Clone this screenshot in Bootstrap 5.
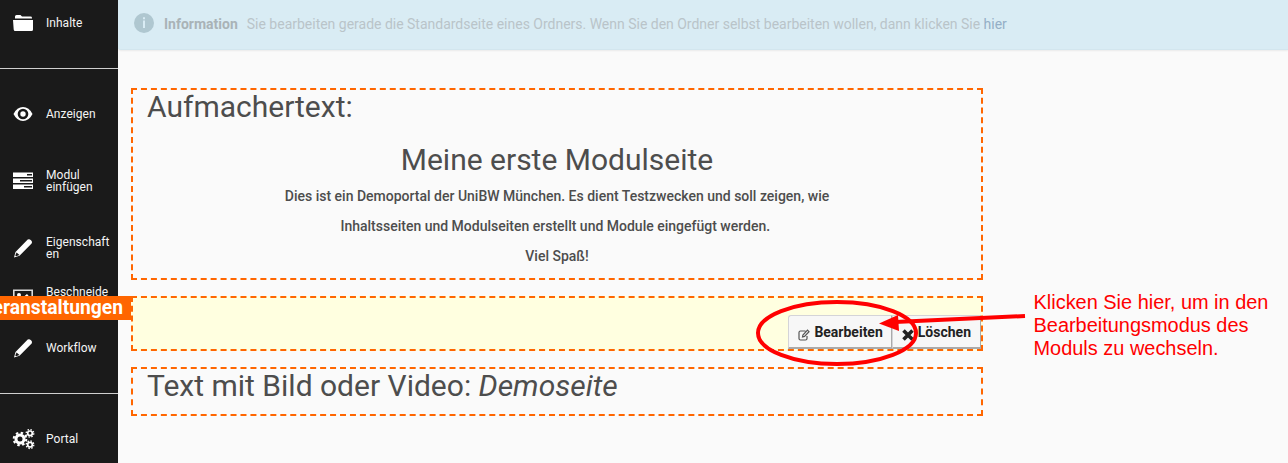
<!DOCTYPE html>
<html lang="de">
<head>
<meta charset="utf-8">
<meta name="viewport" content="width=device-width, initial-scale=1">
<title>Modulseite bearbeiten</title>
<link href="https://cdn.jsdelivr.net/npm/bootstrap@5.3.0/dist/css/bootstrap.min.css" rel="stylesheet">
<style>
body{font-family:Roboto,"Liberation Sans",sans-serif;background:#fafafa;color:#4d4d4d;height:463px}
.side{width:118px;background:#1a1a1a;color:#fff;font-size:12px;line-height:12px}
.side .entry{height:67px;padding-left:12px;gap:12px;color:#f4f4f4;flex-shrink:0}
.side .entry svg{width:22px;height:22px;flex-shrink:0}
.side .entry span{width:66px;overflow-wrap:anywhere;letter-spacing:.03px}
.side .rule{height:1px;background:#cfcfcf;flex-shrink:0}
.side .rule.lower{margin:12px 0 11px}
.side .entry.first{height:46px;margin-bottom:22px}
.side .entry.view{margin-top:11px}
.side .entry.crop{height:33px}
.band{left:0;top:296px;width:131px;height:24px;background:#f60;color:#fff;font-size:19.3px;line-height:24px;font-weight:700;padding-right:8px}
.info{height:50px;background:#d9ecf4;color:#b9c4c9;font-size:14px;padding:0 16px;margin-bottom:38px;border-bottom:1px solid #d3e6ee;border-bottom-left-radius:3px;box-shadow:0 1px 2px #0001}
.info svg{margin-top:-4px}
.info b{color:#a9b3b7;margin:0 9px 0 10px}
.info a{color:#94afc6}
.info-copy{letter-spacing:-.01px}
.content-col{width:852px;margin-left:13px;gap:16px}
.module{border:2px dashed #f60}
.module h2{font-size:30px;line-height:34px;font-weight:400;padding-left:14px;margin:0;color:#4d4d4d}
.module .headline{margin-top:19px;margin-bottom:4px}
.intro p{font-size:14px;line-height:30px;font-weight:500;margin:0}
.module-intro{height:192px}
.module-events{height:55px;background:#ffffe0}
.module-media{height:49px}
.tools .btn{height:34px;border:1px solid #d4d4d8;border-right-color:#aaa;border-bottom:2px solid #aaa;background:#f7f7f7;color:#222;font-size:14px;font-weight:700;border-radius:0;padding:2px 8px 0 9px;line-height:31px}
.tools .btn:last-child{padding-right:9px}
.tools .btn:first-child{border-top-left-radius:3px}
.note{color:#f00;font:19.95px/23px "Liberation Sans",sans-serif;left:1033.5px;top:291px}
.marks{left:740px;top:285px}
</style>
</head>
<body class="d-flex overflow-hidden position-relative">
<svg class="d-none"><symbol id="pen" viewBox="0 0 22 22"><path fill="#fff" d="M2 20.5 3.5 15 14.5 3.7Q16.7 1 19 3.2T18.4 7.8L7.5 18.8Z"/><path fill="#1a1a1a" d="m4.5 15.5 3 2.6-3.4 1.2-.8-.8z"/></symbol></svg>
<nav class="side d-flex flex-column h-100 flex-shrink-0">
  <div class="entry first d-flex align-items-center"><svg viewBox="0 0 22 22"><path fill="#fff" d="M3 6V4.5Q3 3 4.5 3H8.5L10 4.6H18.5Q20 4.6 20 6V6.4H3ZM1 8H21V17.5Q21 19 19.5 19H3.2Q1.8 19 1.7 17.5Z"/></svg><span>Inhalte</span></div>
  <div class="rule"></div>
  <div class="entry view d-flex align-items-center"><svg viewBox="0 0 22 22"><path fill="#fff" d="M1.5 11Q5 4 11 4T20.5 11Q17 18 11 18T1.5 11Z"/><circle cx="11" cy="11" r="5.3" fill="#1a1a1a"/><circle cx="11" cy="11" r="2.7" fill="#fff"/></svg><span>Anzeigen</span></div>
  <div class="entry d-flex align-items-center"><svg viewBox="0 0 22 22"><path fill="#fff" d="M1 2.5h20v4.5H1zM1 8.5h20V13H1zM1 14.5h20V19H1z"/><path stroke="#1a1a1a" stroke-width="1.5" d="M15 4.8h5M8 10.8h12M12 16.8h8"/></svg><span>Modul einfügen</span></div>
  <div class="entry d-flex align-items-center"><svg viewBox="0 0 22 22"><use href="#pen"/></svg><span>Eigenschaften</span></div>
  <div class="entry crop d-flex align-items-center"><svg viewBox="0 0 22 22"><path fill="none" stroke="#ddd" stroke-width="1.6" d="M1.8 3.3H20.2V18.5H1.8Z"/><circle cx="7" cy="8" r="2" fill="#fff"/><path fill="#fff" d="m9 12 6-5 4 5v5H4z"/></svg><span>Beschneiden</span></div>
  <div class="entry d-flex align-items-center"><svg viewBox="0 0 22 22"><use href="#pen"/></svg><span>Workflow</span></div>
  <div class="rule lower"></div>
  <div class="entry d-flex align-items-center"><svg viewBox="0 0 22 22" overflow="visible" fill="none" stroke="#fff"><circle cx="8" cy="11" r="4" stroke-width="3"/><circle cx="8" cy="11" r="6.3" stroke-width="2" stroke-dasharray="2.47 2.47"/><circle cx="18" cy="5.3" r="2.3" stroke-width="1.7"/><circle cx="18" cy="5.3" r="3.8" stroke-width="1.3" stroke-dasharray="1.5 1.48"/><circle cx="18" cy="16.7" r="2.3" stroke-width="1.7"/><circle cx="18" cy="16.7" r="3.8" stroke-width="1.3" stroke-dasharray="1.5 1.48"/></svg><span>Portal</span></div>
</nav>
<div class="band position-absolute overflow-hidden d-flex justify-content-end">Veranstaltungen</div>
<main class="flex-grow-1 position-relative">
  <div class="info d-flex align-items-center text-nowrap"><svg width="20" height="20"><circle cx="10" cy="10" r="10" fill="#afc7d0"/><path fill="#d9ecf4" d="M9 4.3h2v2H9zM9 7.5h2V15H9z"/></svg><b>Information</b><span class="info-copy">Sie bearbeiten gerade die Standardseite eines Ordners. Wenn Sie den Ordner selbst bearbeiten wollen, dann klicken Sie <a class="text-decoration-none" href="#">hier</a></span></div>
  <div class="content-col d-flex flex-column">
    <section class="module intro module-intro">
      <h2>Aufmachertext:</h2>
      <div class="text-center"><h2 class="headline p-0">Meine erste Modulseite</h2>
      <p>Dies ist ein Demoportal der UniBW München. Es dient Testzwecken und soll zeigen, wie<br>Inhaltsseiten und Modulseiten erstellt und Module eingefügt werden.&nbsp;<br>Viel Spaß!</p></div>
    </section>
    <section class="module tools module-events d-flex justify-content-end align-items-end">
      <button class="btn d-flex align-items-center"><svg width="12" height="12" class="me-1 mt-1" fill="none" stroke="#555" stroke-width="1.2"><path d="M7.5 2H2.5Q1 2 1 3.5V9.5Q1 11 2.5 11H7.5Q9 11 9 9.5V7M4.5 8l.4-2L9.5 1.2 11 2.7 6.5 7.4Z"/></svg>Bearbeiten</button>
      <button class="btn d-flex align-items-center"><svg width="12" height="12" class="me-1 mt-1"><path stroke="#222" stroke-width="3.6" d="m1.5 1.5 9 9m0-9-9 9"/></svg>Löschen</button>
    </section>
    <section class="module module-media"><h2>Text mit Bild oder Video: <em>Demoseite</em></h2></section>
  </div>
</main>
<svg class="marks position-absolute" width="290" height="90" fill="none" stroke="#f00"><ellipse cx="97" cy="48" rx="79" ry="31" stroke-width="4"/><path stroke-width="4" d="M155 37 285 31"/><path fill="#f00" stroke="none" d="M139 38.5 158 30 159 46Z"/></svg>
<div class="note position-absolute text-nowrap">Klicken Sie hier, um in den<br>Bearbeitungsmodus des<br>Moduls zu wechseln.</div>
<script src="https://cdn.jsdelivr.net/npm/bootstrap@5.3.0/dist/js/bootstrap.bundle.min.js"></script>
</body>
</html>
